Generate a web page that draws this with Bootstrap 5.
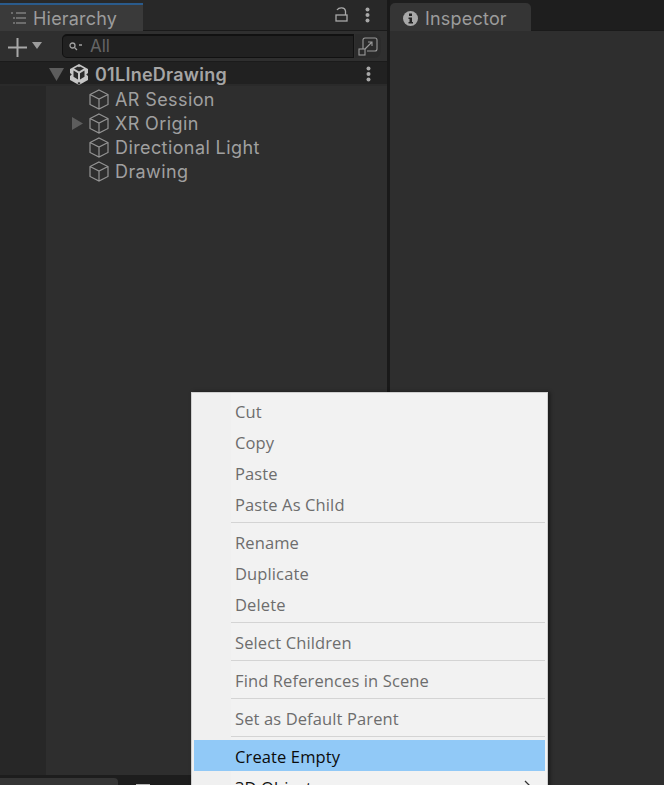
<!DOCTYPE html>
<html lang="en"><head><meta charset="utf-8">
<link href="https://cdn.jsdelivr.net/npm/bootstrap@5.3.0/dist/css/bootstrap.min.css" rel="stylesheet">
<style>
html,body{height:100%;margin:0;overflow:hidden;background:#191919}
.editor{width:664px;height:785px;position:relative;overflow:hidden;font-family:Inter,"Liberation Sans",sans-serif;color:#9a9a9a}
.pane-l{width:387px;height:785px;flex:none}
.pane-l>*{flex:none}
.pane-r{width:274px;height:785px;flex:none;margin-left:3px}
.strip{height:31px;background:#282828;border-bottom:1px solid #1a1a1a;flex:none}
.strip-r{background:#1e1e1e}
.tab-h{width:143px;height:28px;margin-top:3px;background:#3a3a3a;border-top:2px solid #2a5b8c;font-size:18px;color:#9c9c9c;padding-left:10px;gap:6px;letter-spacing:.2px}
.tab-i{width:141px;height:28px;margin-top:3px;padding-top:2px;background:#353535;border-radius:5px 5px 0 0;font-size:18px;color:#9c9c9c;padding-left:13px;gap:7px;letter-spacing:.2px}
.tools{height:31px;background:#2f2f2f;border-bottom:1px solid #1b1b1b;padding:3px 0 0 8px}
.searchbox{width:292px;height:24px;margin-left:19px;background:#212121;border:1px solid #111;border-top-width:2px;border-radius:5px 0 0 5px;font-size:17px;color:#656565;padding-left:6px;gap:8px}
.popbtn{width:26px;height:24px;background:#2b2b2b;border-radius:0 7px 7px 0;margin-left:1px}
.scene{height:24px;background:#212121;border-bottom:2px solid #2a2a2a;font-weight:600;font-size:18px;color:#a5a5a5;padding:2px 0 0 49px}
.scene-logo{margin-left:5px}
.scene-name{margin-left:6px;letter-spacing:.25px}
.scene-dots{margin-right:16px}
.tree{height:689px}
.gutter{width:46px;background:#272727;flex:none}
.rows{background:#2e2e2e;padding-top:1px}
.node{height:24px;font-size:18px;color:#a0a0a0;letter-spacing:.4px;gap:6px}
.arrow{width:11px;margin-left:26px;flex:none;display:flex}
.lock-row{padding-right:17px}
.pane-fill{background:#2e2e2e}
.bottom{height:10px;background:#1d1d1d;padding-top:3px}
.bottom-tab{width:118px;height:7px;background:#353535;border-radius:0 4px 0 0}
.bottom-mark{width:14px;height:1px;margin:6px 0 0 18px;background:#b5b5b5}
.ctx{position:absolute;left:191px;top:392px;width:357px;height:400px;background:linear-gradient(90deg,#f0f0f0 39px,#f2f2f2 39px);border:1px solid #cfcfcf;padding:2px;font-family:"Open Sans","Noto Sans",sans-serif;font-size:16.5px;box-shadow:2px 0 4px rgba(0,0,0,.45)}
.ctx-item{height:31px;line-height:33px;padding-left:41px;color:#6d6d6d;letter-spacing:.12px;position:relative;list-style:none}
.ctx-item.hot{background:#91c9f7;color:#0b0b0b}
.ctx-item.live{color:#111}
.ctx-sep{height:1px;background:#d4d4d4;margin:3px 0 3px 37px;list-style:none}
.caret{position:absolute;right:14px;top:9px}
</style></head><body>
<div class="editor d-flex">
  <div class="pane-l d-flex flex-column">
    <div class="strip d-flex">
      <div class="tab-h d-flex align-items-center">
        <svg width="17" height="14" viewBox="0 0 17 14" fill="none" stroke="#a0a0a0"><path d="M1 2h2M6 2h10M3 7h2M6 7h10M3 12h2M6 12h10"/></svg>
        <span>Hierarchy</span>
      </div>
      <div class="ms-auto d-flex align-items-center gap-3 lock-row">
        <svg width="14" height="16" viewBox="0 0 14 16" fill="none" stroke="#a8a8a8" stroke-width="1.3"><rect x="1" y="8" width="11" height="6"/><path d="M2 3C4 0 10 0 10.500 4V8"/></svg>
        <svg width="5" height="16" viewBox="0 0 5 16" fill="#a8a8a8"><circle cx="2.500" cy="2.500" r="2"/><circle cx="2.500" cy="8" r="2"/><circle cx="2.500" cy="13.500" r="2"/></svg>
      </div>
    </div>
    <div class="tools d-flex align-items-start">
      <svg class="mt-1" width="19" height="19" viewBox="0 0 19 19" stroke="#a8a8a8" stroke-width="2"><path d="M9.500 0v19M0 9.500h19"/></svg>
      <svg class="ms-1 mt-2" width="12" height="8" viewBox="0 0 12 8" fill="#9c9c9c"><path d="M1 0h10L6 7z"/></svg>
      <div class="searchbox d-flex align-items-center">
        <svg width="13" height="10" viewBox="0 0 13 10" fill="none" stroke="#a0a0a0" stroke-width="1.300"><circle cx="3.500" cy="3.500" r="2.500"/><path d="M5.500 5.500L8 8M10 3h3"/></svg>
        <span>All</span>
      </div>
      <div class="popbtn d-flex align-items-center justify-content-center">
        <svg width="20" height="19" viewBox="0 0 20 19" fill="none" stroke="#9a9a9a" stroke-width="1.100"><path d="M5 12V3a2 2 0 0 1 2-2h10a2 2 0 0 1 2 2v9a2 2 0 0 1-2 2H9"/><rect x="1" y="12" width="6" height="6"/><path d="M7 12l7-7M10 5h4v4"/></svg>
      </div>
    </div>
    <div class="scene d-flex align-items-center">
      <svg width="15" height="13" viewBox="0 0 15 13" fill="#5d5d5d"><path d="M0 0h15L7.500 13z"/></svg>
      <svg class="scene-logo" width="20" height="21" viewBox="0 0 20 21"><path d="M10 0l9 5v11l-9 5-9-5V5z" fill="#c6c6c6"/><path d="M10 7.500l5-3-4-2-1 .8-1-.8-4 2zM9 9.300L4.500 6.600v6.200L9 15.500zM11 9.300l4.500-2.700v6.200L11 15.500zM1 9l1.800 1.500L1 12zM19 9l-1.800 1.500L19 12zM10 21l-1.500-2 1.500-1 1.500 1z" fill="#2b2b2b"/></svg>
      <span class="scene-name flex-grow-1">01LIneDrawing</span>
      <svg class="scene-dots" width="5" height="16" viewBox="0 0 5 16" fill="#a8a8a8"><circle cx="2.500" cy="2.500" r="2"/><circle cx="2.500" cy="8" r="2"/><circle cx="2.500" cy="13.500" r="2"/></svg>
    </div>
    <div class="tree d-flex">
      <div class="gutter"></div>
      <div class="rows flex-grow-1">
        <div class="node d-flex align-items-center">
          <span class="arrow"></span>
          <svg width="20" height="21" viewBox="0 0 20 21" fill="none" stroke="#949494" stroke-width="1.200"><path d="M10 1l9 4.500v10L10 20l-9-4.500v-10zM1 5.500L10 10l9-4.500M10 10v10"/></svg>
          <span>AR Session</span>
        </div>
        <div class="node d-flex align-items-center">
          <span class="arrow"><svg width="11" height="13" viewBox="0 0 11 13" fill="#5d5d5d"><path d="M0 0l11 6.500L0 13z"/></svg></span>
          <svg width="20" height="21" viewBox="0 0 20 21" fill="none" stroke="#949494" stroke-width="1.200"><path d="M10 1l9 4.500v10L10 20l-9-4.500v-10zM1 5.500L10 10l9-4.500M10 10v10"/></svg>
          <span>XR Origin</span>
        </div>
        <div class="node d-flex align-items-center">
          <span class="arrow"></span>
          <svg width="20" height="21" viewBox="0 0 20 21" fill="none" stroke="#949494" stroke-width="1.200"><path d="M10 1l9 4.500v10L10 20l-9-4.500v-10zM1 5.500L10 10l9-4.500M10 10v10"/></svg>
          <span>Directional Light</span>
        </div>
        <div class="node d-flex align-items-center">
          <span class="arrow"></span>
          <svg width="20" height="21" viewBox="0 0 20 21" fill="none" stroke="#949494" stroke-width="1.200"><path d="M10 1l9 4.500v10L10 20l-9-4.500v-10zM1 5.500L10 10l9-4.500M10 10v10"/></svg>
          <span>Drawing</span>
        </div>
      </div>
    </div>
    <div class="bottom d-flex"><div class="bottom-tab"></div><div class="bottom-mark"></div></div>
  </div>
  <div class="pane-r d-flex flex-column">
    <div class="strip strip-r d-flex">
      <div class="tab-i d-flex align-items-center">
        <svg width="15" height="15" viewBox="0 0 15 15"><circle cx="7.500" cy="7.500" r="7.500" fill="#a8a8a8"/><rect x="6" y="2.500" width="3" height="2.500" fill="#222"/><path d="M5.500 6.500H9V11h1v1.500H5.500V11h1V8h-1z" fill="#222"/></svg>
        <span>Inspector</span>
      </div>
    </div>
    <div class="pane-fill flex-grow-1"></div>
  </div>
  <ul class="ctx m-0">
    <li class="ctx-item">Cut</li>
    <li class="ctx-item">Copy</li>
    <li class="ctx-item">Paste</li>
    <li class="ctx-item">Paste As Child</li>
    <li class="ctx-sep"></li>
    <li class="ctx-item">Rename</li>
    <li class="ctx-item">Duplicate</li>
    <li class="ctx-item">Delete</li>
    <li class="ctx-sep"></li>
    <li class="ctx-item">Select Children</li>
    <li class="ctx-sep"></li>
    <li class="ctx-item">Find References in Scene</li>
    <li class="ctx-sep"></li>
    <li class="ctx-item">Set as Default Parent</li>
    <li class="ctx-sep"></li>
    <li class="ctx-item hot">Create Empty</li>
    <li class="ctx-item live">3D Object<svg class="caret" width="7" height="12" viewBox="0 0 7 12" fill="none" stroke="#333" stroke-width="1.300"><path d="M1 1l5 5-5 5"/></svg></li>
  </ul>
</div>
<script src="https://cdn.jsdelivr.net/npm/bootstrap@5.3.0/dist/js/bootstrap.bundle.min.js"></script>
</body></html>
